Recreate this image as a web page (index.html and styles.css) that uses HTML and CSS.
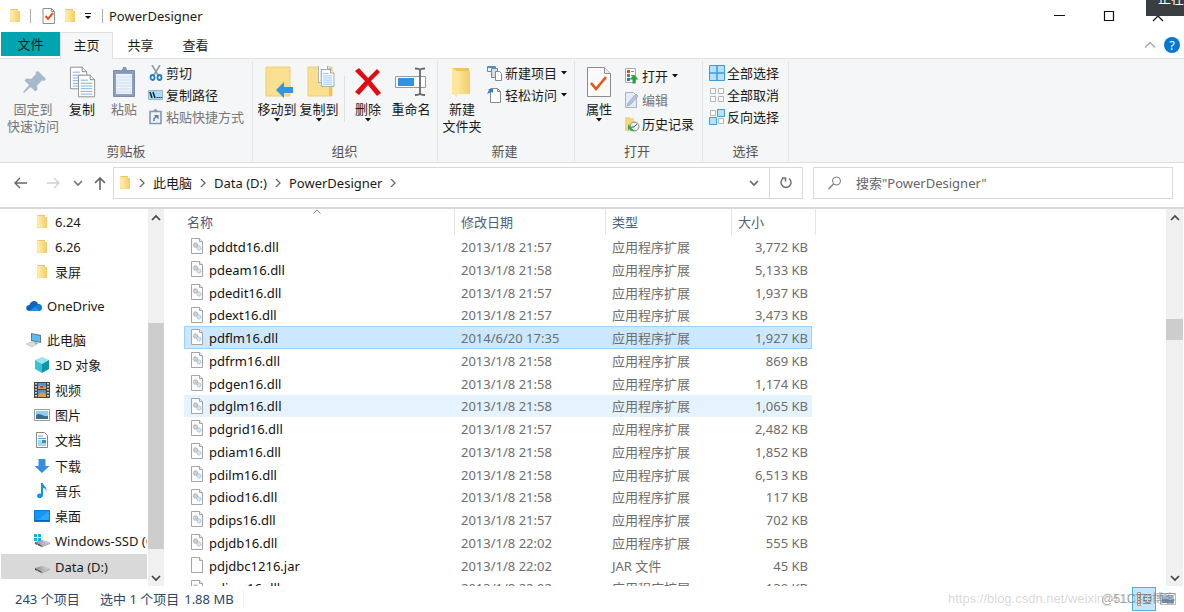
FILE: index.html
```html
<!DOCTYPE html>
<html lang="zh-CN">
<head>
<meta charset="utf-8">
<title>PowerDesigner</title>
<link rel="stylesheet" href="styles.css">
</head>
<body>
<svg class="defs" aria-hidden="true">
  <linearGradient id="gold" x1="0" x2="1"><stop offset="0" stop-color="#ffe9a6"/><stop offset="1" stop-color="#f3cd66"/></linearGradient>
  <linearGradient id="disk" x1="0" x2="1"><stop offset="0" stop-color="#8d8d8d"/><stop offset="1" stop-color="#dcdcdc"/></linearGradient>
  <symbol id="folder" viewBox="0 0 12 16"><path d="M1 1h8v2h2v11H1z" fill="#f0c75c"/><path d="M3 2h6v1h2v11H3z" fill="url(#gold)"/><path d="M1 1l3 2v12l-3-2z" fill="#ffe8a3"/></symbol>
  <symbol id="bigfolder" viewBox="0 0 32 32"><path d="M6 2h17v26H6z" fill="#efc65b"/><path d="M10 5h14v23H10z" fill="url(#gold)"/><path d="M6 2l5 3v26l-5-4z" fill="#ffe69b"/></symbol>
  <symbol id="checkdoc" viewBox="0 0 14 16"><path d="M1 .5h8.500l3 3v12H1z" fill="#fafafa" stroke="#8f8f8f"/><path d="M9.500.5v3h3" fill="none" stroke="#8f8f8f"/><path d="M3.500 8l2.500 3 5-6" fill="none" stroke="#e8551c" stroke-width="2"/></symbol>
  <symbol id="tri" viewBox="0 0 6 4"><path d="M0 0h6L3 3.500z" fill="#111"/></symbol>
  <symbol id="right" viewBox="0 0 8 8"><path d="M2 0l4 4-4 4" fill="none" stroke="#666" stroke-width="1.300"/></symbol>
  <symbol id="down" viewBox="0 0 10 8"><path d="M1 2l4 4 4-4" fill="none" stroke="currentColor" stroke-width="1.700"/></symbol>
  <symbol id="up" viewBox="0 0 10 8"><path d="M1 6l4-4 4 4" fill="none" stroke="currentColor" stroke-width="1.700"/></symbol>
  <symbol id="page" viewBox="0 0 20 25"><path d="M.5.5h13l5 5v19H.5z" fill="#fff" stroke="#858585"/><path d="M13.500.5v5h5" fill="#eee" stroke="#858585"/><path d="M3 6h8M3 9.500h13M3 12.500h13M3 15.500h13M3 18.500h13M3 21.500h13" stroke="#6fa8e8"/></symbol>
  <symbol id="dll" viewBox="0 0 14 17"><path d="M1.500.5h8l3 3v12h-11z" fill="#fcfcfc" stroke="#a5a5a5"/><path d="M9.500.5v3h3" fill="#eee" stroke="#a5a5a5"/><circle cx="5.500" cy="7" r="2.200" fill="#d0d0d0" stroke="#a5a5a5" stroke-dasharray="1.300 .5"/><circle cx="9" cy="10" r="2" fill="#d5e7f5" stroke="#92b9d8" stroke-dasharray="1.300 .5"/></symbol>
  <symbol id="jar" viewBox="0 0 14 17"><path d="M1.500.5h8l3 3v12h-11z" fill="#fcfcfc" stroke="#a5a5a5"/><path d="M9.500.5v3h3" fill="#eee" stroke="#a5a5a5"/></symbol>
  <symbol id="drive" viewBox="0 0 16 16"><path d="M1 9v2l7 3V12z" fill="#444"/><path d="M1 9l7-2 8 2-8 4z" fill="url(#disk)"/><path d="M8 12.500L16 9v2l-8 3.500z" fill="#b5b5b5"/><path d="M2.500 10.800l1.500.6" stroke="#67d36b"/></symbol>
</svg>

<header class="titlebar">
  <svg class="i-folder"><use href="#folder"/></svg>
  <span class="bar"></span>
  <button class="quick" aria-label="属性"><svg class="i-check"><use href="#checkdoc"/></svg></button>
  <button class="quick" aria-label="新建文件夹"><svg class="i-folder"><use href="#folder"/></svg></button>
  <button class="quick quick-menu" aria-label="自定义快速访问工具栏"><svg width="8" height="8" viewBox="0 0 8 8"><path d="M1 1.500h6" stroke="#111"/><path d="M1 4h6L4 7z" fill="#111"/></svg></button>
  <span class="bar"></span>
  <h1 class="title">PowerDesigner</h1>
  <div class="window-buttons">
    <button aria-label="最小化"><svg width="12" height="12"><path d="M0 5.500h11" stroke="#111"/></svg></button>
    <button aria-label="最大化"><svg width="12" height="12"><path d="M1.500 1.500h9v9h-9z" fill="none" stroke="#111" stroke-width="1.200"/></svg></button>
    <button aria-label="关闭"><svg width="12" height="12"><path d="M1 1l10 10M11 1L1 11" stroke="#111" stroke-width="1.200"/></svg></button>
  </div>
  <div class="toast">正在</div>
</header>

<nav class="tabs">
  <button class="tab tab-file">文件</button>
  <button class="tab tab-active">主页</button>
  <button class="tab">共享</button>
  <button class="tab">查看</button>
  <div class="tabs-end">
    <button aria-label="最小化功能区"><svg width="12" height="8"><path d="M1 6.500l5-5 5 5" fill="none" stroke="#a5a5a5" stroke-width="1.300"/></svg></button>
    <button class="help" aria-label="帮助">?</button>
  </div>
</nav>

<section class="ribbon">
  <div class="group g-clip">
    <div class="tools">
      <button class="big w58 off"><svg class="i-big" viewBox="0 0 32 32"><path d="M21 5l8 8-2 2-2-.5-5 5 .5 4-2 2-5-4.500L7 27l-1-1 6-7-4.500-4.500 2-2 4.500.5 5-5-.5-2z" fill="#a9b9cd"/></svg>固定到<br>快速访问</button>
      <button class="big w40"><svg class="i-big" viewBox="0 0 32 32"><use href="#page" x="4" y="0" width="18" height="24"/><use href="#page" x="12" y="8" width="18" height="24"/></svg>复制</button>
      <button class="big w44 off"><svg class="i-big" viewBox="0 0 32 32"><path d="M5.500 4.500h21v26h-21z" fill="#8ba0bd" stroke="#788eac"/><path d="M8 8h16v20H8z" fill="#edf3fb"/><path d="M8 11h16M8 14h16M8 17h16M8 20h16M8 23h16M8 26h16" stroke="#cddcf0"/><path d="M11 7V4h3l1-3h3l1 3h3v3z" fill="#8497b0"/></svg>粘贴</button>
      <div class="small-list">
        <button class="small"><svg class="i-small" viewBox="0 0 16 16"><path d="M4 0l6 10M12 0L6 10" stroke="#8a99a8" stroke-width="1.500"/><ellipse cx="4.500" cy="12.500" rx="2" ry="2.500" fill="none" stroke="#1a7fc4" stroke-width="1.800"/><ellipse cx="11.500" cy="12.500" rx="2" ry="2.500" fill="none" stroke="#1a7fc4" stroke-width="1.800"/></svg>剪切</button>
        <button class="small"><svg class="i-small" viewBox="0 0 16 16"><path d="M.5 3.500h14v9H.5z" fill="#a8dcf5" stroke="#8eb7cd"/><path d="M2 5l2 6M5 5l2 6" stroke="#123" stroke-width="1.500"/><path d="M8.500 10.500h1.300M10.500 10.500h1.300M12.500 10.500h1.300" stroke="#123"/></svg>复制路径</button>
        <button class="small off"><svg class="i-small" viewBox="0 0 16 16"><path d="M2 2.500h11v12H2z" fill="#eef3fa" stroke="#8497b3" stroke-width="1.600"/><path d="M5 3V1.500h1.500V0h2v1.500H10V3z" fill="#8497b3"/><path d="M6 12V9.500l3-2.500" fill="none" stroke="#5f7aa2" stroke-width="1.500"/><path d="M6 6h4.500v4.500z" fill="#5f7aa2"/></svg>粘贴快捷方式</button>
      </div>
    </div>
    <div class="caption">剪贴板</div>
  </div>

  <div class="group g-org">
    <div class="tools">
      <button class="big w42"><svg class="i-big" viewBox="0 0 32 32"><path d="M5 1h24v29H5z" fill="#fbdf91" stroke="#f1ce70"/><path d="M15 24l8-8v5h9v6h-9v5z" fill="#3195e4"/></svg>移动到<svg class="i-tri"><use href="#tri"/></svg></button>
      <button class="big w42"><svg class="i-big" viewBox="0 0 32 32"><path d="M5 1h24v29H5z" fill="#fbdf91" stroke="#f1ce70"/><path d="M26 30V21l3-1v10z" fill="#ecc45f"/><use href="#page" x="15" y="-1" width="14" height="18"/><use href="#page" x="18" y="3" width="14" height="18"/></svg>复制到<svg class="i-tri"><use href="#tri"/></svg></button>
      <span class="rule"></span>
      <button class="big w40"><svg class="i-big" viewBox="0 0 32 32"><path d="M3 5l4-3 9 10 9-9 3 3-9 9 10 12-4 3-9-11-9 10-4-3 10-11z" fill="#e10b12"/></svg>删除<svg class="i-tri"><use href="#tri"/></svg></button>
      <button class="big w46"><svg class="i-big" viewBox="0 0 32 32"><path d="M.5 10.500h30v11H.5z" fill="#fff" stroke="#9a9a9a"/><path d="M3 12h16v8H3z" fill="#2f92e3"/><path d="M25 4v23M20 2.500c3 0 5 .5 5 2 0-1.500 2-2 5-2M20 29c3 0 5-.5 5-2 0 1.500 2 2 5 2" fill="none" stroke="#6a6a6a" stroke-width="1.800"/></svg>重命名</button>
    </div>
    <div class="caption">组织</div>
  </div>

  <div class="group g-new">
    <div class="tools">
      <button class="big w46"><svg class="i-big" viewBox="0 0 32 32"><use href="#bigfolder" width="32" height="32"/></svg>新建<br>文件夹</button>
      <div class="small-list">
        <button class="small"><svg class="i-small" viewBox="0 0 16 16"><path d="M.5 1.500h8v5h-8z" fill="#e7f4fc" stroke="#4d92bb"/><path d="M.5 2.500h8" stroke="#4d92bb"/><path d="M4.500 3.500h6v9h-6z" fill="#d5dde4" stroke="#7b8994"/><path d="M8.500 6.500h4l2 2v7h-6z" fill="#fff" stroke="#7d8b96"/></svg>新建项目<svg class="i-tri"><use href="#tri"/></svg></button>
        <button class="small"><svg class="i-small" viewBox="0 0 16 16"><path d="M3.500 1.500h7l3 3v11h-10z" fill="#fff" stroke="#8a8a8a"/><path d="M10.500 1.500v3h3" fill="none" stroke="#8a8a8a"/><path d="M0 7l2-4-.5-1H6v4L4.500 5z" fill="#2a82c5"/></svg>轻松访问<svg class="i-tri"><use href="#tri"/></svg></button>
      </div>
    </div>
    <div class="caption">新建</div>
  </div>

  <div class="group g-open">
    <div class="tools">
      <button class="big w46"><svg class="i-big" viewBox="0 0 32 32"><path d="M4.500 1.500h17l6 6v23h-23z" fill="#fafafa" stroke="#8c8c8c"/><path d="M21.500 1.500v6h6" fill="#eee" stroke="#8c8c8c"/><path d="M8 17l5 6 10-12" fill="none" stroke="#ea5413" stroke-width="2.600"/></svg>属性<svg class="i-tri"><use href="#tri"/></svg></button>
      <div class="small-list loose">
        <button class="small"><svg class="i-small" viewBox="0 0 16 16"><path d="M1.500.5h10v14h-10z" fill="#fff" stroke="#aaa"/><path d="M3 2h3v3H3z" fill="#e5442e"/><path d="M3 6h3v3H3z" fill="#3b9b42"/><path d="M3 10h3v3H3z" fill="#2779d0"/><path d="M7 3.500h3M7 7.500h3" stroke="#888"/><path d="M5.500 11.500l4.500-5 4.500 5h-3v4h-3v-4z" fill="#25a536"/></svg>打开<svg class="i-tri"><use href="#tri"/></svg></button>
        <button class="small off"><svg class="i-small" viewBox="0 0 16 16"><path d="M1.500.5h8l3 3v12h-11z" fill="#e5ecf5" stroke="#a3b3c8"/><path d="M3 14l1-3 8-9 2 2-8 9z" fill="#b5c4da" stroke="#9fb2cb"/></svg>编辑</button>
        <button class="small"><svg class="i-small" viewBox="0 0 16 16"><path d="M1 1h4l1 1h4v13H1z" fill="#f7d67b"/><circle cx="10.500" cy="10.500" r="4.500" fill="#e9eeee" stroke="#888"/><path d="M13 8l-3 3H8" fill="none" stroke="#555"/><path d="M4 8.500l4.500 3-1 .8c1 1.200 2 1.700 3.500 1.700-2 2-4 1.500-5.500-.7l-1.500.7z" fill="#35a852"/></svg>历史记录</button>
      </div>
    </div>
    <div class="caption">打开</div>
  </div>

  <div class="group g-select">
    <div class="tools">
      <div class="small-list">
        <button class="small"><svg class="i-small" viewBox="0 0 16 16"><path d="M.5.5h15v15H.5z" fill="#b9e0fb" stroke="#3d9be0"/><path d="M8 0v16M0 8h16" stroke="#3d9be0" stroke-width="1.500"/></svg>全部选择</button>
        <button class="small"><svg class="i-small" viewBox="0 0 16 16"><path d="M1.500 1.500h5v5h-5zM9.500 1.500h5v5h-5zM1.500 9.500h5v5h-5zM9.500 9.500h5v5h-5z" fill="#fff" stroke="#b5b5b5"/></svg>全部取消</button>
        <button class="small"><svg class="i-small" viewBox="0 0 16 16"><path d="M1.500 1.500h5v5h-5zM9.500 9.500h5v5h-5z" fill="#fff" stroke="#b5b5b5"/><path d="M8.500.5h7v7h-7zM.5 8.500h7v7h-7z" fill="#b9e0fb" stroke="#3d9be0"/></svg>反向选择</button>
      </div>
    </div>
    <div class="caption">选择</div>
  </div>
</section>

<div class="location">
  <div class="history">
    <button aria-label="返回"><svg width="14" height="12"><path d="M13 6H1M6 1L1 6l5 5" fill="none" stroke="#666" stroke-width="1.400"/></svg></button>
    <button aria-label="前进"><svg width="14" height="12"><path d="M0 6h12M7 1l5 5-5 5" fill="none" stroke="#d0d0d0" stroke-width="1.400"/></svg></button>
    <button class="recent" aria-label="最近浏览的位置"><svg class="i-arrow"><use href="#down"/></svg></button>
    <button class="parent" aria-label="上移"><svg width="12" height="14"><path d="M6 14V2M1 7l5-5 5 5" fill="none" stroke="#666" stroke-width="1.600"/></svg></button>
  </div>
  <div class="address">
    <div class="crumbs">
      <svg class="i-folder"><use href="#folder"/></svg>
      <svg class="i-right"><use href="#right"/></svg><a href="#pc">此电脑</a>
      <svg class="i-right"><use href="#right"/></svg><a href="#d">Data (D:)</a>
      <svg class="i-right"><use href="#right"/></svg><a href="#pd">PowerDesigner</a>
      <svg class="i-right"><use href="#right"/></svg>
    </div>
    <button class="previous" aria-label="以前的位置"><svg class="i-arrow"><use href="#down"/></svg></button>
    <button class="refresh" aria-label="刷新"><svg width="14" height="14"><path d="M4 2.500a5 5 0 1 0 6 0M3 2h3.500v3.500" fill="none" stroke="#707070" stroke-width="1.500"/></svg></button>
  </div>
  <label class="search"><svg width="14" height="14"><circle cx="8.500" cy="5" r="4" fill="none" stroke="#777"/><path d="M5.500 8L.5 13" stroke="#777" stroke-width="1.200"/></svg><input type="search" aria-label="搜索" placeholder='搜索"PowerDesigner"'></label>
</div>

<main class="content">
  <nav class="tree">
    <a class="node" href="#624"><svg class="i-node"><use href="#folder"/></svg>6.24</a>
    <a class="node" href="#626"><svg class="i-node"><use href="#folder"/></svg>6.26</a>
    <a class="node" href="#lp"><svg class="i-node"><use href="#folder"/></svg>录屏</a>
    <a class="node root" href="#od"><svg class="i-node" viewBox="0 0 16 16"><path d="M4 13c-5 0-5-6-.5-6C5 2 11 2 12 6c5 0 5 7 1 7z" fill="#0a64bd"/><path d="M3 13l7-5 4 5z" fill="#1993e6"/><path d="M8 9l4-3c4 0 5 4 3 6z" fill="#117bd2"/></svg>OneDrive</a>
    <a class="node root" href="#pc"><svg class="i-node" viewBox="0 0 16 16"><path d="M5 1l10 2v8L5 9z" fill="#607684"/><path d="M6 2l8 2v6L6 8z" fill="#57bdf2"/><path d="M8 10l4 1-2 2z" fill="#888"/><path d="M0 12l5-2 6 2-5 3z" fill="#d5dde2" stroke="#aab2b8" stroke-width=".5"/></svg>此电脑</a>
    <a class="node" href="#3d"><svg class="i-node" viewBox="0 0 16 16"><path d="M8 0l7 3-7 4-7-4z" fill="#98e5ef"/><path d="M1 3l7 4v9l-7-4z" fill="#3bbfd1"/><path d="M15 3L8 7v9l7-4z" fill="#0798ad"/></svg>3D 对象</a>
    <a class="node" href="#video"><svg class="i-node" viewBox="0 0 16 16"><path d="M0 0h16v16H0z" fill="#444"/><path d="M4 1h8v6H4zM4 8h8v7H4z" fill="#4d91dc"/><path d="M4 5l3-2 3 2 2-1v3H4zM4 13l4-3 4 2v3H4z" fill="#d5a440"/><path d="M6 4h3v2H6z" fill="#cf3f30"/><path d="M2 1v14M14 1v14" stroke="#fff" stroke-width="1.500" stroke-dasharray="1.500 1.500"/></svg>视频</a>
    <a class="node" href="#pic"><svg class="i-node" viewBox="0 0 16 16"><path d="M.5 2.500h15v11H.5z" fill="#fff" stroke="#9b9b9b"/><path d="M2 4h12v8H2z" fill="#8fd1f2"/><path d="M2 8c4-3 6 2 12 1v3H2z" fill="#376f88"/></svg>图片</a>
    <a class="node" href="#doc"><svg class="i-node" viewBox="0 0 16 16"><path d="M2.500.5h8l3 3v12h-11z" fill="#fff" stroke="#888"/><path d="M4 4h5M4 6.500h8M4 9h3M4 11h8M4 13h8" stroke="#4caadb"/><path d="M8 8h4v3H8z" fill="#3f8fb5"/></svg>文档</a>
    <a class="node" href="#dl"><svg class="i-node" viewBox="0 0 16 16"><path d="M4.500 1h7v7h4L8 15 .5 8h4z" fill="#3490df"/></svg>下载</a>
    <a class="node" href="#music"><svg class="i-node" viewBox="0 0 16 16"><path d="M7 0h2c0 3 5 4 3 9 0-3-1-4-3-4v7c0 4-6 4-6 1 0-2 2-3 4-2z" fill="#1094ed"/></svg>音乐</a>
    <a class="node" href="#desk"><svg class="i-node" viewBox="0 0 16 16"><path d="M.5 2.500h15v11H.5z" fill="#1497f3" stroke="#0879cd"/><path d="M1 12.500h14" stroke="#0568b4"/><path d="M15 3v9L4 12z" fill="#28a8ff"/></svg>桌面</a>
    <a class="node" href="#c"><svg class="i-node" viewBox="0 0 16 16"><use href="#drive" width="16" height="16"/><path d="M0 1h3v3H0zM4 1h3v3H4zM0 5h3v3H0zM4 5h3v3H4z" fill="#13b1ee"/></svg>Windows-SSD (C:)</a>
    <a class="node current" href="#d"><svg class="i-node"><use href="#drive"/></svg>Data (D:)</a>
  </nav>
  <div class="scroll scroll-tree">
    <button aria-label="向上滚动"><svg class="i-arrow"><use href="#up"/></svg></button>
    <div class="track"><span class="before"></span><span class="thumb"></span></div>
    <button aria-label="向下滚动"><svg class="i-arrow"><use href="#down"/></svg></button>
  </div>

  <div class="files">
    <svg class="sort" viewBox="0 0 8 5"><path d="M.5 4.500L4 1l3.500 3.500" fill="none" stroke="#777"/></svg>
    <table>
      <colgroup><col class="c-name"><col class="c-date"><col class="c-type"><col class="c-size"><col class="c-end"></colgroup>
      <thead><tr><th>名称</th><th>修改日期</th><th>类型</th><th colspan="2">大小</th></tr></thead>
      <tbody>
        <tr><td><svg class="i-file"><use href="#dll"/></svg>pddtd16.dll</td><td>2013/1/8 21:57</td><td>应用程序扩展</td><td>3,772 KB</td></tr>
        <tr><td><svg class="i-file"><use href="#dll"/></svg>pdeam16.dll</td><td>2013/1/8 21:58</td><td>应用程序扩展</td><td>5,133 KB</td></tr>
        <tr><td><svg class="i-file"><use href="#dll"/></svg>pdedit16.dll</td><td>2013/1/8 21:57</td><td>应用程序扩展</td><td>1,937 KB</td></tr>
        <tr><td><svg class="i-file"><use href="#dll"/></svg>pdext16.dll</td><td>2013/1/8 21:57</td><td>应用程序扩展</td><td>3,473 KB</td></tr>
        <tr class="selected"><td><svg class="i-file"><use href="#dll"/></svg>pdflm16.dll</td><td>2014/6/20 17:35</td><td>应用程序扩展</td><td>1,927 KB</td></tr>
        <tr><td><svg class="i-file"><use href="#dll"/></svg>pdfrm16.dll</td><td>2013/1/8 21:58</td><td>应用程序扩展</td><td>869 KB</td></tr>
        <tr><td><svg class="i-file"><use href="#dll"/></svg>pdgen16.dll</td><td>2013/1/8 21:58</td><td>应用程序扩展</td><td>1,174 KB</td></tr>
        <tr class="hovered"><td><svg class="i-file"><use href="#dll"/></svg>pdglm16.dll</td><td>2013/1/8 21:58</td><td>应用程序扩展</td><td>1,065 KB</td></tr>
        <tr><td><svg class="i-file"><use href="#dll"/></svg>pdgrid16.dll</td><td>2013/1/8 21:57</td><td>应用程序扩展</td><td>2,482 KB</td></tr>
        <tr><td><svg class="i-file"><use href="#dll"/></svg>pdiam16.dll</td><td>2013/1/8 21:58</td><td>应用程序扩展</td><td>1,852 KB</td></tr>
        <tr><td><svg class="i-file"><use href="#dll"/></svg>pdilm16.dll</td><td>2013/1/8 21:58</td><td>应用程序扩展</td><td>6,513 KB</td></tr>
        <tr><td><svg class="i-file"><use href="#dll"/></svg>pdiod16.dll</td><td>2013/1/8 21:58</td><td>应用程序扩展</td><td>117 KB</td></tr>
        <tr><td><svg class="i-file"><use href="#dll"/></svg>pdips16.dll</td><td>2013/1/8 21:57</td><td>应用程序扩展</td><td>702 KB</td></tr>
        <tr><td><svg class="i-file"><use href="#dll"/></svg>pdjdb16.dll</td><td>2013/1/8 22:02</td><td>应用程序扩展</td><td>555 KB</td></tr>
        <tr><td><svg class="i-file"><use href="#jar"/></svg>pdjdbc1216.jar</td><td>2013/1/8 22:02</td><td>JAR 文件</td><td>45 KB</td></tr>
        <tr><td><svg class="i-file"><use href="#dll"/></svg>pdjvm16.dll</td><td>2013/1/8 22:02</td><td>应用程序扩展</td><td>130 KB</td></tr>
      </tbody>
    </table>
  </div>
  <div class="scroll scroll-files">
    <button aria-label="向上滚动"><svg class="i-arrow"><use href="#up"/></svg></button>
    <div class="track"><span class="before"></span><span class="thumb"></span></div>
    <button aria-label="向下滚动"><svg class="i-arrow"><use href="#down"/></svg></button>
  </div>
</main>

<footer class="status">
  <span class="count">243 个项目</span>
  <span class="picked">选中 1 个项目</span>
  <span class="total">1.88 MB</span>
  <div class="views">
    <button class="view-on" aria-label="详细信息"><svg width="16" height="14"><path d="M1.500.5h3v13h-3z" fill="#fff" stroke="#999"/><path d="M3 2v1M3 5v1M3 8v1M3 11v1" stroke="#c33" stroke-width="1.500"/><path d="M7 2.500h4M12 2.500h3M7 5.500h4M12 5.500h3M7 8.500h4M12 8.500h3M7 11.500h8" stroke="#888"/></svg></button>
    <button aria-label="大缩略图"><svg width="16" height="14"><path d="M.5 1.500h15v11H.5z" fill="#fff" stroke="#bbb"/><path d="M2 3h12v8H2z" fill="#9cc8ee"/><path d="M2 7c5-1 7 2 12 1v3H2z" fill="#6c93aa"/></svg></button>
  </div>
  <div class="mark mark-url">https://blog.csdn.net/weixin_41119805</div>
  <div class="mark mark-site">@51CTO博客</div>
</footer>
</body>
</html>
```

FILE: styles.css
```css
* { box-sizing: border-box; }

body {
  margin: 0;
  height: 100vh;
  display: flex;
  flex-direction: column;
  overflow: hidden;
  background: #fff;
  color: #1a1a1a;
  font: 13px/18px "Noto Sans", "Noto Sans CJK SC", sans-serif;
}

button {
  margin: 0;
  padding: 0;
  border: 0;
  background: none;
  color: inherit;
  font: inherit;
}

a { color: inherit; text-decoration: none; }
svg { display: block; flex: none; }

.defs { position: absolute; width: 0; height: 0; }
.i-folder { width: 12px; height: 16px; }
.i-check { width: 14px; height: 16px; }
.i-big { width: 32px; height: 32px; }
.i-small { width: 16px; height: 16px; }
.i-node { width: 16px; height: 16px; }
.i-tri { width: 6px; height: 4px; }
.i-right { width: 8px; height: 8px; }
.i-arrow { width: 10px; height: 8px; }
.i-file { width: 14px; height: 17px; }

/* Title bar */
.titlebar {
  position: relative;
  display: flex;
  align-items: center;
  flex: none;
  height: 32px;
  padding-left: 9px;
}
.bar { width: 1px; height: 14px; margin: 0 11px 0 9px; background: #aaa; }
.quick { margin-right: 8px; }
.quick-menu { margin: 0 1px 0 0; }
.quick-menu + .bar { margin-right: 6px; }
.title { margin: 0; font: inherit; }
.window-buttons { display: flex; margin-left: auto; padding-right: 2px; }
.window-buttons button { display: flex; justify-content: center; width: 49px; }
.toast {
  position: absolute;
  top: 0;
  right: 0;
  display: flex;
  align-items: flex-end;
  width: 38px;
  height: 16px;
  padding: 0 0 9px 12px;
  overflow: hidden;
  background: #3a3d42;
  color: #fff;
  white-space: nowrap;
}

/* Tabs */
.tabs { display: flex; flex: none; height: 27px; padding-left: 1px; border-bottom: 1px solid #dfe0e1; }
.tab { width: 55px; height: 25px; }
.tab-file { width: 59px; height: 24px; background: #00a5b0; }
.tab-active { width: 53px; height: 27px; padding-bottom: 2px; border: 1px solid #dfe0e1; border-bottom: 0; background: #f5f6f7; }
.tabs-end { display: flex; align-items: center; gap: 8px; margin-left: auto; padding-right: 4px; }
.help { width: 16px; height: 16px; border-radius: 8px; background: #0078d7; color: #fff; line-height: 16px; }

/* Ribbon */
.ribbon { display: flex; flex: none; height: 104px; padding-top: 2px; border-bottom: 1px solid #dcddde; background: #f5f6f7; }
.group { display: flex; flex-direction: column; justify-content: space-between; height: 100px; border-right: 1px solid #e2e3e4; }
.g-clip { width: 253px; padding-left: 4px; }
.g-org { width: 185px; padding-left: 3px; }
.g-new { width: 137px; padding-left: 1px; }
.g-open { width: 128px; padding-left: 1px; }
.g-select { width: 86px; padding-left: 4px; }
.tools { display: flex; padding-top: 5px; }
.caption { height: 19px; padding-right: 4px; color: #555; text-align: center; }
.big { display: flex; flex-direction: column; align-items: center; align-self: flex-start; line-height: 17px; white-space: nowrap; }
.big .i-big { margin-bottom: 3px; }
.w40 { width: 40px; }
.w42 { width: 42px; }
.w44 { width: 44px; }
.w46 { width: 46px; }
.w58 { width: 58px; }
.off { color: #777; }
.rule { width: 1px; height: 46px; margin: 10px 3px 0 4px; background: #dedfe0; }
.small-list { display: flex; flex-direction: column; margin: -4px 0 0 2px; }
.small { display: flex; align-items: center; gap: 2px; height: 22px; white-space: nowrap; }
.small .i-tri { margin-left: 2px; }
.loose { gap: 2px; margin-top: -1px; }

/* Address row */
.location { display: flex; flex: none; height: 46px; padding: 4px 11px 8px 0; border-bottom: 2px solid #d9d9d9; }
.history { display: flex; align-items: center; width: 113px; padding-left: 14px; }
.history button { margin-right: 19px; }
.history .recent { margin: 0 11px 0 -7px; color: #777; }
.history .parent { margin: 0; }
.address { display: flex; flex: 2; border: 1px solid #d9d9d9; }
.crumbs { display: flex; flex: 1; align-items: center; gap: 7px; padding-left: 5px; white-space: nowrap; }
.previous { display: flex; align-items: center; justify-content: center; width: 30px; color: #666; }
.refresh { display: flex; align-items: center; justify-content: center; width: 33px; border-left: 1px solid #d9d9d9; }
.search { display: flex; flex: 1; align-items: center; gap: 14px; margin-left: 10px; padding-left: 14px; border: 1px solid #d9d9d9; }
.search input { flex: 1; min-width: 0; padding: 0; border: 0; outline: 0; background: none; font: inherit; }
.search input::placeholder { color: #666; opacity: 1; }

/* Folder tree */
.content { display: flex; flex: 1; min-height: 0; }
.tree { width: 147px; overflow: hidden; }
.node { display: flex; align-items: center; gap: 5px; height: 25px; margin-left: 1px; padding-left: 33px; white-space: nowrap; }
.node:nth-child(4n + 9) { height: 26px; }
.node.root { margin-top: 9px; padding-left: 25px; }
.node.current { background: #d9d9d9; }

/* Scroll bars */
.scroll { display: flex; flex-direction: column; width: 17px; background: #f0f0f0; color: #444; }
.scroll button { display: flex; align-items: center; justify-content: center; height: 17px; }
.track { display: flex; flex: 1; flex-direction: column; }
.thumb { background: #cdcdcd; }
.scroll-tree { width: 16px; margin: 0 1px; }
.scroll-tree .before { flex: 97; }
.scroll-tree .thumb { flex: 226; }
.scroll-tree .track { padding-bottom: 20px; }
.scroll-files { margin-right: 1px; }
.scroll-files .before { height: 27%; }
.scroll-files .thumb { height: 21px; }

/* File list */
.files { position: relative; flex: 1; margin-left: 19px; overflow: hidden; }
.files table { width: 632px; table-layout: fixed; border-spacing: 0; }
.sort { position: absolute; top: 0; left: 129px; width: 8px; height: 5px; }
.c-name { width: 271px; }
.c-date { width: 151px; }
.c-type { width: 126px; }
.c-size { width: 80px; }
.c-end { width: 4px; }
.files th { height: 26px; padding: 0 6px; border-right: 1px solid #e5e5e5; color: #4c607a; font-weight: normal; text-align: left; }
.files th:first-child { padding-left: 3px; }
.files td { height: 23px; padding: 0 6px; border: 0 solid transparent; border-width: 1px 0; color: #6d6d6d; line-height: 20px; white-space: nowrap; }
.files tr:nth-child(4n) td { height: 22px; }
.files td:first-child { display: flex; align-items: center; gap: 5px; color: #111; }
.files td:nth-child(4) { padding: 0 4px 0 0; text-align: right; }
.hovered td { background: #e5f3ff; }
.files .selected td { border-color: #99d1ff; background: #cce8ff; }
.files .selected td:first-child { border-left-width: 1px; padding-left: 5px; }
.files .selected td:last-child { border-right-width: 1px; padding-right: 3px; }

/* Status bar */
.status { position: relative; display: flex; flex: none; align-items: center; height: 26px; padding-left: 15px; color: #2b4769; }
.count { width: 85px; }
.picked { margin-right: 5px; }
.total { padding-right: 9px; border-right: 1px solid #eee; }
.views { display: flex; align-items: center; gap: 4px; margin-left: auto; padding-right: 8px; }
.view-on { display: flex; align-items: center; justify-content: center; width: 24px; height: 24px; border: 1px solid #45b5e8; background: #c3e7f7; }
.mark { position: absolute; white-space: nowrap; font-family: "Liberation Sans", "Noto Sans CJK SC", sans-serif; }
.mark-url { left: calc(100% - 236px); color: rgba(120, 120, 120, .3); }
.mark-site { right: 8px; color: rgba(110, 110, 110, .6); font-size: 12px; }
```
